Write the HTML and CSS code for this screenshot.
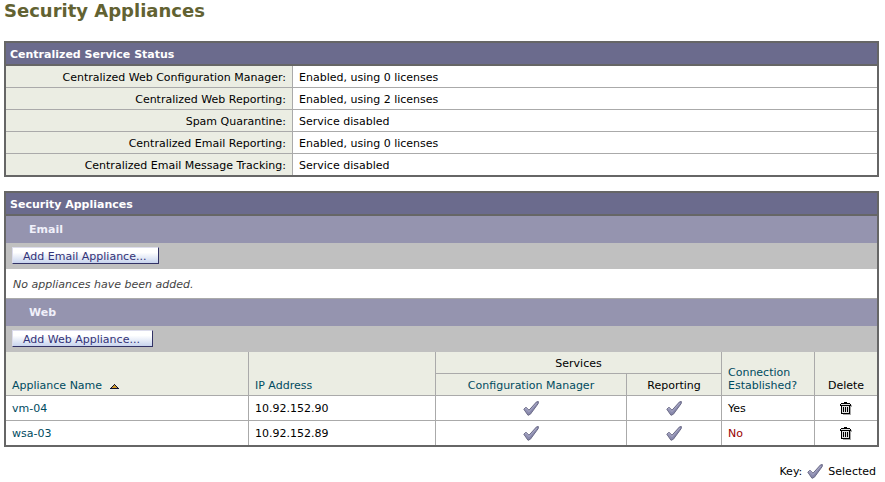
FILE: index.html
```
<!DOCTYPE html>
<html lang="en">
<head>
  <meta charset="UTF-8">
  <meta name="viewport" content="width=device-width, initial-scale=1.0">
  <title>Security Appliances</title>
  <link rel="stylesheet" href="styles.css">
</head>
<body>

  <!-- Shared icons -->
  <svg class="icon-defs" aria-hidden="true">
    <linearGradient id="check-fill" x1="0" y1="0" x2="1" y2="1">
      <stop offset="0" stop-color="#a8a8c6"/>
      <stop offset="1" stop-color="#74749c"/>
    </linearGradient>
    <symbol id="check" viewBox="0 0 16 15">
      <path d="M.8 8.2 3 6.3 6 9.2 13.6.8 15.4.6 15.2 2.6 7.4 13.2 5 14.3Z" fill="url(#check-fill)" stroke="#6a6a86" stroke-width="1" stroke-linejoin="round"/>
      <path d="M2 8 3.1 7.2 6 10.6 13.8 2" fill="none" stroke="#b6b6d0" stroke-width=".7"/>
    </symbol>
    <symbol id="trash" viewBox="0 0 12 13">
      <path d="M3 2h8v1h1v2h-1v8H3v-1h7V4H3Z" fill="#a8a8a8"/>
      <path d="M4 0h3v1h3v1h1v2h-1v8H1V4H0V2h1V1h3Z" fill="#000"/>
      <path d="M1 2h9v1H1ZM2 4h7v7H2Z" fill="#e0e0e0"/>
      <path d="M3 5h1v5H3ZM5 5h1v5H5ZM7 5h1v5H7Z" fill="#000"/>
    </symbol>
  </svg>

  <h1>Security Appliances</h1>

  <table class="panel status">
    <colgroup>
      <col class="col-label">
      <col>
    </colgroup>
    <thead>
      <tr><th class="panel-title" colspan="2">Centralized Service Status</th></tr>
    </thead>
    <tbody>
      <tr><th scope="row">Centralized Web Configuration Manager:</th><td>Enabled, using 0 licenses</td></tr>
      <tr><th scope="row">Centralized Web Reporting:</th><td>Enabled, using 2 licenses</td></tr>
      <tr><th scope="row">Spam Quarantine:</th><td>Service disabled</td></tr>
      <tr><th scope="row">Centralized Email Reporting:</th><td>Enabled, using 0 licenses</td></tr>
      <tr><th scope="row">Centralized Email Message Tracking:</th><td>Service disabled</td></tr>
    </tbody>
  </table>

  <table class="panel appliances">
    <colgroup>
      <col>
      <col class="col-ip">
      <col class="col-config">
      <col class="col-reporting">
      <col class="col-connection">
      <col class="col-delete">
    </colgroup>
    <tbody>
      <tr><th class="panel-title" colspan="6">Security Appliances</th></tr>
      <tr><th class="section" colspan="6">Email</th></tr>
      <tr><td class="toolbar" colspan="6"><button type="button" class="btn">Add Email Appliance...</button></td></tr>
      <tr><td class="empty" colspan="6">No appliances have been added.</td></tr>
      <tr><th class="section" colspan="6">Web</th></tr>
      <tr><td class="toolbar" colspan="6"><button type="button" class="btn">Add Web Appliance...</button></td></tr>
      <tr class="head">
        <th rowspan="2">
          <a href="#">Appliance Name</a>
          <svg class="sort" viewBox="0 0 9 5"><path d="M4 0h1v1h1v1h1v1h1v1h1v1H0V4h1V3h1V2h1V1h1Z" fill="#101030"/><path d="M4 1h1v1h1v1h1v1H2V3h1V2h1Z" fill="#d09a28"/></svg>
        </th>
        <th rowspan="2"><a href="#">IP Address</a></th>
        <th class="center" colspan="2">Services</th>
        <th rowspan="2"><a href="#">Connection Established?</a></th>
        <th class="center" rowspan="2">Delete</th>
      </tr>
      <tr class="head">
        <th class="center"><a href="#">Configuration Manager</a></th>
        <th class="center">Reporting</th>
      </tr>
      <tr class="row">
        <td><a href="#">vm-04</a></td>
        <td>10.92.152.90</td>
        <td class="center"><svg class="check" role="img" aria-label="Selected"><use href="#check"/></svg></td>
        <td class="center"><svg class="check" role="img" aria-label="Selected"><use href="#check"/></svg></td>
        <td>Yes</td>
        <td class="center"><button type="button" class="delete" aria-label="Delete vm-04"><svg class="trash"><use href="#trash"/></svg></button></td>
      </tr>
      <tr class="row">
        <td><a href="#">wsa-03</a></td>
        <td>10.92.152.89</td>
        <td class="center"><svg class="check" role="img" aria-label="Selected"><use href="#check"/></svg></td>
        <td class="center"><svg class="check" role="img" aria-label="Selected"><use href="#check"/></svg></td>
        <td class="error">No</td>
        <td class="center"><button type="button" class="delete" aria-label="Delete wsa-03"><svg class="trash"><use href="#trash"/></svg></button></td>
      </tr>
    </tbody>
  </table>

  <div class="key">
    <span>Key:</span>
    <svg class="check"><use href="#check"/></svg>
    <span>Selected</span>
  </div>

</body>
</html>
```
FILE: styles.css
```
body {
  margin: 0;
  padding: 0 6px 0 4px;
  background: #fff;
  color: #000;
  font-family: Verdana, "DejaVu Sans", sans-serif;
  font-size: 11px;
  line-height: 13px;
}

h1 {
  margin: 0 0 19px;
  color: #626232;
  font-size: 18px;
  line-height: 22px;
}

a {
  color: #004b5f;
  text-decoration: none;
}

a:hover {
  text-decoration: underline;
}

.icon-defs {
  display: block;
  width: 0;
  height: 0;
}

/* Panels */
.panel {
  width: 100%;
  margin-bottom: 14px;
  table-layout: fixed;
  border: 2px solid #666;
  border-spacing: 0;
}

.panel th,
.panel td {
  box-sizing: border-box;
  padding: 5px 6px 3px;
  text-align: left;
  font-weight: normal;
}

.panel .panel-title {
  padding: 5px 4px 3px;
  background: #6b6b8d;
  border-bottom: 2px solid #666;
  color: #fff;
  font-weight: bold;
}

/* Service status */
.col-label {
  width: 286px;
}

.status tbody th {
  background: #ebede3;
  text-align: right;
}

.status tbody td {
  border-left: 1px solid #aaa;
}

.status tbody tr + tr > * {
  border-top: 1px solid #aaa;
}

/* Appliance list */
.col-ip {
  width: 187px;
}

.col-config {
  width: 191px;
}

.col-reporting {
  width: 95px;
}

.col-connection {
  width: 93px;
}

.col-delete {
  width: 63px;
}

.panel .section {
  padding: 7px 23px;
  background: #9594af;
  color: #f0f0fa;
  font-weight: bold;
}

.panel .toolbar {
  height: 26px;
  padding: 4px 6px 5px;
  background: #c0c0c0;
}

.panel .empty {
  height: 30px;
  padding: 9px 7px 7px;
  border-bottom: 1px solid #aaa;
  color: #444;
  font-style: italic;
}

.btn {
  display: block;
  height: 17px;
  padding: 1px 12px 0 10px;
  border: 1px solid #dcdcec;
  border-right-color: #333366;
  border-bottom-color: #333366;
  background: linear-gradient(#fff 30%, #c8d4ee);
  color: #333377;
  font: inherit;
  cursor: pointer;
}

.head th {
  background: #ebede3;
  border-bottom: 1px solid #aaa;
  vertical-align: bottom;
}

.head th + th,
.head + .head th,
.row td + td {
  border-left: 1px solid #aaa;
}

.row td {
  height: 24px;
  padding-top: 0;
  padding-bottom: 0;
}

.row + .row td {
  height: 25px;
  border-top: 1px solid #aaa;
}

.panel .center {
  padding-left: 0;
  padding-right: 0;
  text-align: center;
}

.error {
  color: #900;
}

/* Icons */
.sort {
  width: 9px;
  height: 5px;
  margin-left: 4px;
}

.check {
  width: 16px;
  height: 15px;
  vertical-align: middle;
}

.trash {
  display: block;
  width: 12px;
  height: 13px;
}

.delete {
  padding: 0;
  border: 0;
  background: none;
  vertical-align: middle;
  cursor: pointer;
}

.key {
  display: flex;
  justify-content: flex-end;
  align-items: center;
  gap: 5px;
  margin-top: 17px;
  padding-right: 3px;
}
```
